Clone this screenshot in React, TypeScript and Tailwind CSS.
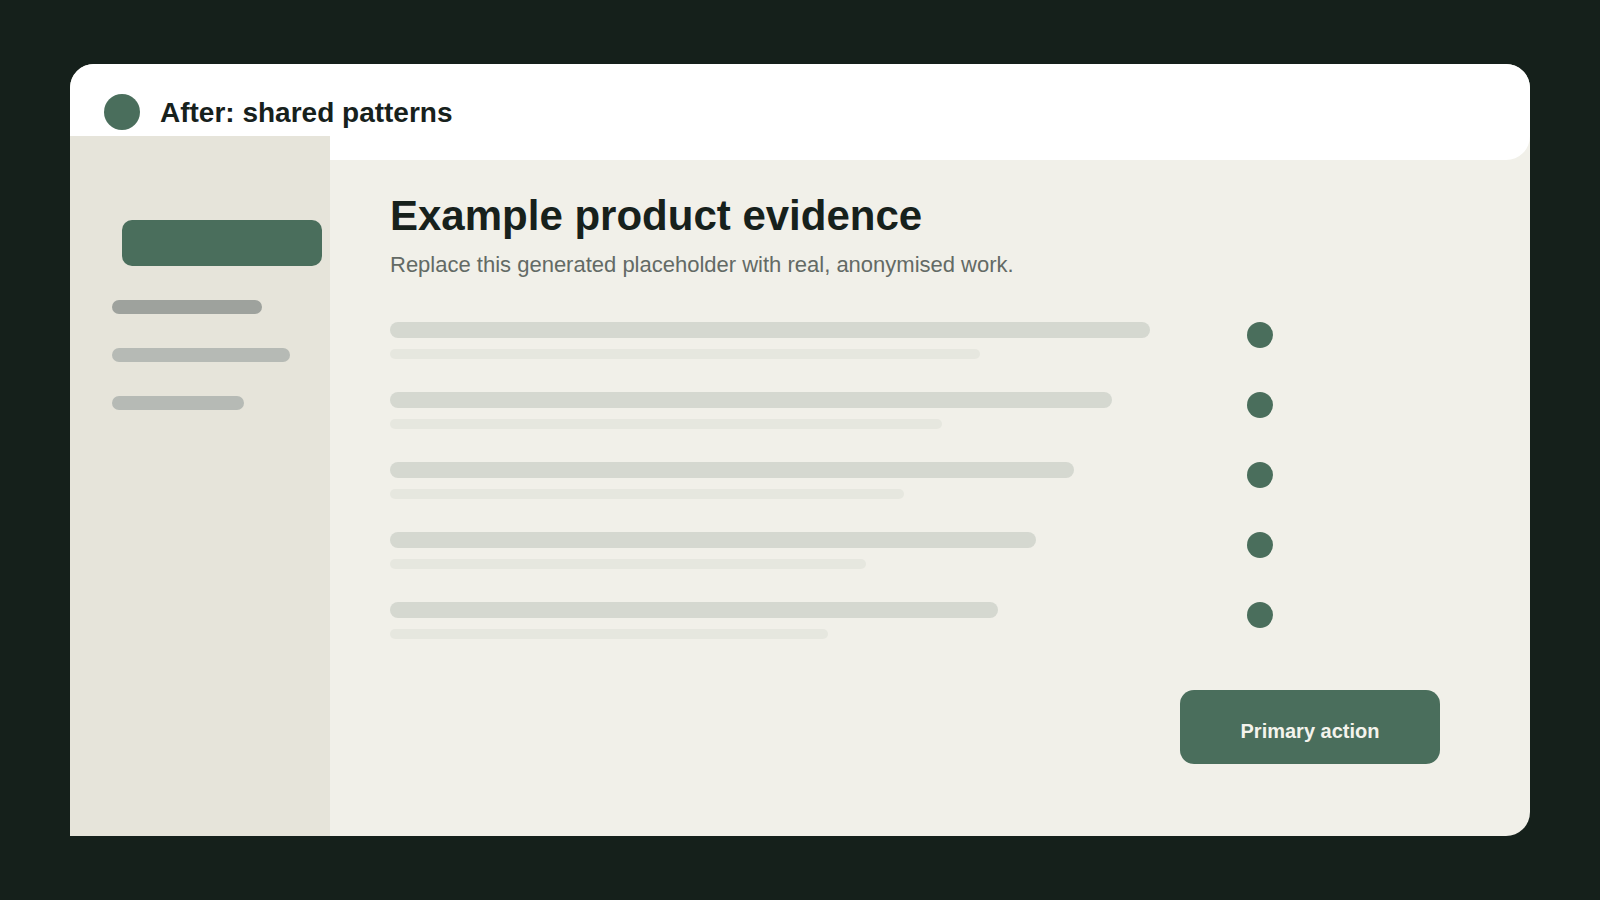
import React from 'react'

const rows = [
  { main: 760, sub: 590 },
  { main: 722, sub: 552 },
  { main: 684, sub: 514 },
  { main: 646, sub: 476 },
  { main: 608, sub: 438 },
]

const navBars = [
  { width: 150, color: 'bg-[#9ea29d]' },
  { width: 178, color: 'bg-[#b6bab5]' },
  { width: 132, color: 'bg-[#b6bab5]' },
]

function Sidebar() {
  return (
    <aside className="relative -mt-6 w-[260px] shrink-0 bg-[#e6e4da] pt-[84px] pl-[42px]">
      <div className="ml-[10px] h-[46px] w-[200px] rounded-[10px] bg-[#4a6e5c]" />
      <div className="mt-[34px] flex flex-col gap-[34px]">
        {navBars.map((bar, i) => (
          <div
            key={i}
            className={`h-[14px] rounded-full ${bar.color}`}
            style={{ width: bar.width }}
          />
        ))}
      </div>
    </aside>
  )
}

function EvidenceRow({ main, sub }: { main: number; sub: number }) {
  return (
    <div className="flex items-start">
      <div className="flex-1">
        <div className="h-4 rounded-full bg-[#d5d8d0]" style={{ width: main }} />
        <div className="mt-[11px] h-[10px] rounded-full bg-[#e6e7df]" style={{ width: sub }} />
      </div>
      <span className="mr-[167px] h-[26px] w-[26px] rounded-full bg-[#4a6e5c]" />
    </div>
  )
}

export default function App() {
  return (
    <div className="flex min-h-screen items-center justify-center bg-[#15201b] font-['Liberation_Sans',Arial,sans-serif]">
      <div className="flex h-[772px] w-[1460px] flex-col rounded-3xl rounded-bl-none bg-[#f1f0e9]">
        <header className="flex h-[96px] shrink-0 items-center gap-5 rounded-3xl bg-white px-[34px]">
          <span className="h-9 w-9 rounded-full bg-[#4a6e5c]" />
          <h1 className="pt-[2px] text-[28px] font-bold text-[#17211c]">After: shared patterns</h1>
        </header>

        <div className="flex flex-1">
          <Sidebar />

          <main className="flex flex-1 flex-col pt-[32px] pr-[90px] pl-[60px]">
            <h2 className="text-[42px] leading-[48px] font-bold text-[#17211c]">
              Example product evidence
            </h2>
            <p className="mt-[10px] text-[22px] leading-[30px] text-[#636a65]">
              Replace this generated placeholder with real, anonymised work.
            </p>

            <div className="mt-[42px] flex flex-col gap-[33px]">
              {rows.map((row, i) => (
                <EvidenceRow key={i} {...row} />
              ))}
            </div>

            <button
              type="button"
              className="mt-[51px] h-[74px] w-[260px] self-end rounded-[14px] bg-[#4a6e5c] pt-2 text-[20px] font-bold text-[#f4f3ec]"
            >
              Primary action
            </button>
          </main>
        </div>
      </div>
    </div>
  )
}
